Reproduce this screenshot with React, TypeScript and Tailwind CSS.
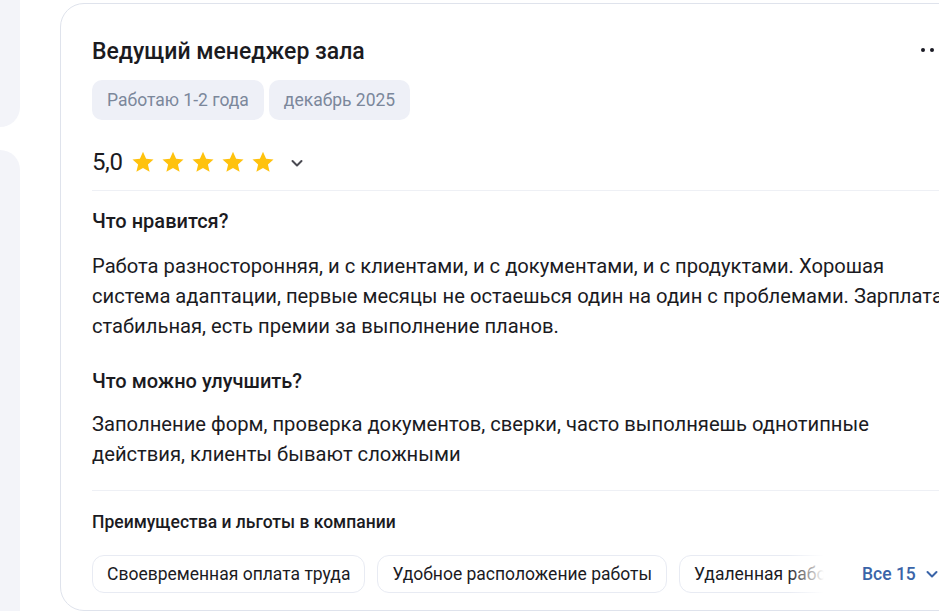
import React from "react";

function Star() {
  return (
    <svg width="24" height="24" viewBox="0 0 24 24" className="shrink-0">
      <path
        d="M12 1.8l3.1 6.9 7.4.7-5.6 5 1.7 7.4L12 17.9l-6.6 3.9 1.7-7.4-5.6-5 7.4-.7z"
        fill="#FFC20E"
      />
    </svg>
  );
}

function Chevron({ color, size = 16 }: { color: string; size?: number }) {
  return (
    <svg width={size} height={size} viewBox="0 0 16 16" fill="none">
      <path d="M3.5 6l4.5 4.5L12.5 6" stroke={color} strokeWidth="2" strokeLinecap="round" strokeLinejoin="round" />
    </svg>
  );
}

export default function App() {
  const chips = ["Своевременная оплата труда", "Удобное расположение работы", "Удаленная работа", "Обучение"];
  return (
    <div className="w-[939px] h-[611px] overflow-hidden bg-white flex font-['Roboto',sans-serif] text-[#1b1b1f]">
      <div className="w-[20px] shrink-0 flex flex-col">
        <div className="h-[127px] bg-[#f3f4f9] rounded-br-[22px]" />
        <div className="mt-[23px] flex-1 bg-[#f3f4f9] rounded-tr-[22px]" />
      </div>
      <div className="ml-[40px] mt-[3px] w-[917px] shrink-0 border border-[#dfe3ec] rounded-[24px] pt-[34px] px-[31px] pb-[40px]">
        <div className="flex items-center justify-between h-[28px]">
          <div className="text-[23px] leading-[28px] font-medium">Ведущий менеджер зала</div>
          <div className="flex gap-[5px] mr-[2px] -mt-[5px]">
            <span className="w-[4px] h-[4px] rounded-full bg-[#1b1b24]" />
            <span className="w-[4px] h-[4px] rounded-full bg-[#1b1b24]" />
            <span className="w-[4px] h-[4px] rounded-full bg-[#1b1b24]" />
          </div>
        </div>
        <div className="mt-[14px] flex gap-[5px]">
          <div className="h-[40px] px-[15px] flex items-center rounded-[10px] bg-[#eef0f7] text-[17.5px] text-[#7b879b]">Работаю 1-2 года</div>
          <div className="h-[40px] px-[15px] flex items-center rounded-[10px] bg-[#eef0f7] text-[17.5px] text-[#7b879b]">декабрь 2025</div>
        </div>
        <div className="mt-[26px] h-[32px] flex items-center">
          <span className="text-[24px] leading-[32px] tracking-[-0.4px]">5,0</span>
          <div className="ml-[8px] flex gap-[6px]">
            <Star /><Star /><Star /><Star /><Star />
          </div>
          <div className="ml-[14px] mt-[1px]">
            <Chevron color="#4a4a52" size={16} />
          </div>
        </div>
        <div className="mt-[12px] h-px bg-[#eef0f5]" />
        <div className="mt-[18px] text-[20px] leading-[24px] font-medium">Что нравится?</div>
        <p className="mt-[18px] text-[20.2px] leading-[30px]">
          Работа разносторонняя, и с клиентами, и с документами, и с продуктами. Хорошая система адаптации, первые месяцы не остаешься один на один с проблемами. Зарплата стабильная, есть премии за выполнение планов.
        </p>
        <div className="mt-[28px] text-[20px] leading-[24px] font-medium">Что можно улучшить?</div>
        <p className="mt-[16px] text-[20.2px] leading-[30px]">
          Заполнение форм, проверка документов, сверки, часто выполняешь однотипные действия, клиенты бывают сложными
        </p>
        <div className="mt-[21px] h-px bg-[#eef0f5]" />
        <div className="mt-[20px] text-[17.5px] leading-[22px] font-medium">Преимущества и льготы в компании</div>
        <div className="mt-[22px] flex items-center">
          <div className="relative w-[732px] shrink-0 overflow-hidden">
            <div className="flex gap-[12px]">
              {chips.map((c) => (
                <div key={c} className="shrink-0 h-[38px] px-[14px] flex items-center rounded-[12px] border border-[#e8ebf3] text-[17.5px]">
                  {c}
                </div>
              ))}
            </div>
            <div className="absolute right-0 top-0 h-full w-[36px] bg-gradient-to-r from-white/0 to-white" />
          </div>
          <div className="ml-[38px] shrink-0 flex items-center gap-[8px] text-[17.5px] font-medium text-[#3a64a8]">
            <span>Все 15</span>
            <Chevron color="#3a64a8" size={16} />
          </div>
        </div>
      </div>
    </div>
  );
}
